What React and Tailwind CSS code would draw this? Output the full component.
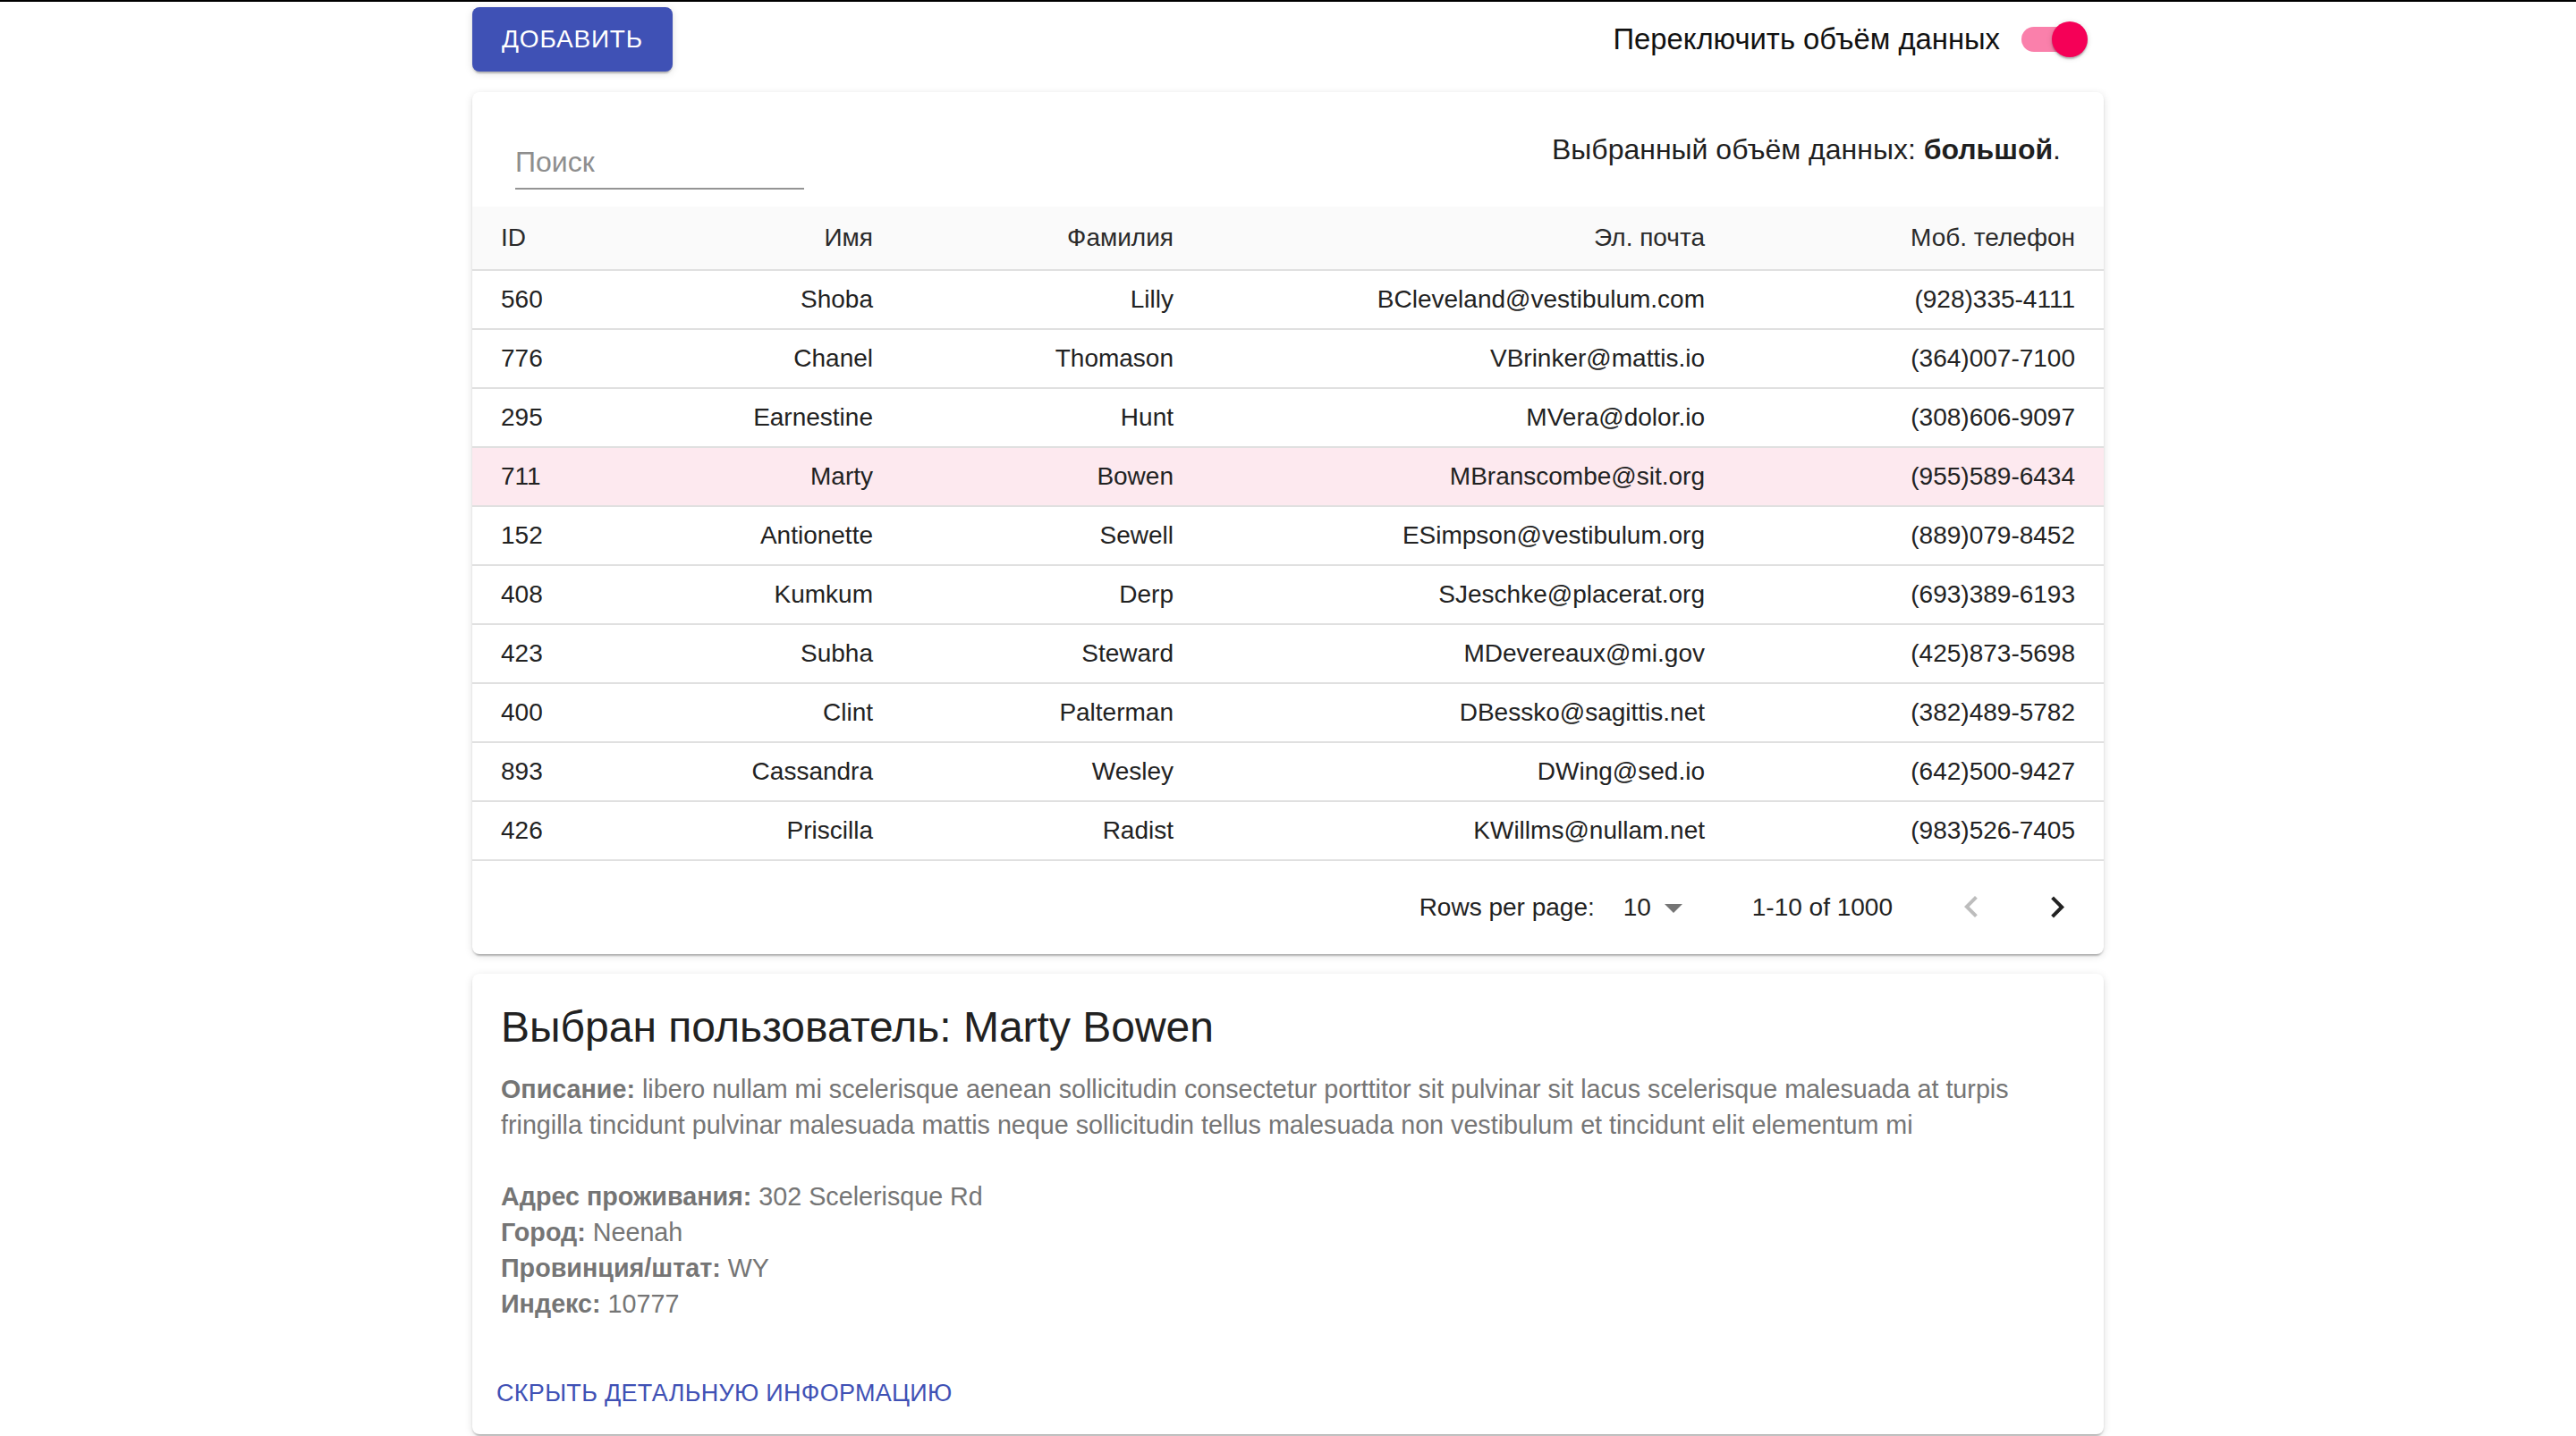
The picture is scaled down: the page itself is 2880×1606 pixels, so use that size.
import React from 'react';

const rows = [
  { id: 560, first: 'Shoba', last: 'Lilly', email: 'BCleveland@vestibulum.com', phone: '(928)335-4111' },
  { id: 776, first: 'Chanel', last: 'Thomason', email: 'VBrinker@mattis.io', phone: '(364)007-7100' },
  { id: 295, first: 'Earnestine', last: 'Hunt', email: 'MVera@dolor.io', phone: '(308)606-9097' },
  { id: 711, first: 'Marty', last: 'Bowen', email: 'MBranscombe@sit.org', phone: '(955)589-6434' },
  { id: 152, first: 'Antionette', last: 'Sewell', email: 'ESimpson@vestibulum.org', phone: '(889)079-8452' },
  { id: 408, first: 'Kumkum', last: 'Derp', email: 'SJeschke@placerat.org', phone: '(693)389-6193' },
  { id: 423, first: 'Subha', last: 'Steward', email: 'MDevereaux@mi.gov', phone: '(425)873-5698' },
  { id: 400, first: 'Clint', last: 'Palterman', email: 'DBessko@sagittis.net', phone: '(382)489-5782' },
  { id: 893, first: 'Cassandra', last: 'Wesley', email: 'DWing@sed.io', phone: '(642)500-9427' },
  { id: 426, first: 'Priscilla', last: 'Radist', email: 'KWillms@nullam.net', phone: '(983)526-7405' },
];

const selectedId = 711;
const cols = 'grid grid-cols-[200px_296px_336px_594px_398px] items-center';
const paper =
  'bg-white rounded-[8px] shadow-[0_2px_2px_0_rgba(0,0,0,0.14),0_6px_2px_-4px_rgba(0,0,0,0.12),0_2px_10px_0_rgba(0,0,0,0.12)]';

function Cells({ r }) {
  return (
    <>
      <div className="pl-[32px]">{r.id}</div>
      <div className="text-right pr-[48px]">{r.first}</div>
      <div className="text-right pr-[48px]">{r.last}</div>
      <div className="text-right pr-[48px]">{r.email}</div>
      <div className="text-right pr-[32px]">{r.phone}</div>
    </>
  );
}

export default function App() {
  return (
    <div className="min-h-[1606px] bg-white font-['Liberation_Sans',Arial,sans-serif] text-[#212121]">
      <div className="h-[2px] bg-black" />

      <div className="w-[1824px] mx-auto">
        {/* Top bar */}
        <div className="h-[84px] flex items-center justify-between">
          <button className="h-[72px] w-[224px] rounded-[8px] bg-[#3f51b5] text-white text-[28px] font-medium tracking-[0.8px] uppercase shadow-[0_2px_2px_0_rgba(0,0,0,0.14),0_6px_2px_-4px_rgba(0,0,0,0.12),0_2px_10px_0_rgba(0,0,0,0.12)]">
            Добавить
          </button>
          <div className="flex items-center">
            <span className="text-[32.8px] text-[#111]">Переключить объём данных</span>
            <div className="relative w-[116px] h-[76px]">
              <div className="absolute left-[24px] top-[24px] w-[68px] h-[28px] rounded-full bg-[#fa80ab]" />
              <div className="absolute left-[58px] top-[18px] w-[40px] h-[40px] rounded-full bg-[#f50057] shadow-[0_2px_2px_0_rgba(0,0,0,0.24),0_1px_6px_0_rgba(0,0,0,0.14)]" />
            </div>
          </div>
        </div>

        {/* Table card */}
        <div className={`mt-[17px] ${paper} overflow-hidden`}>
          <div className="h-[128px] flex justify-between px-[48px]">
            <div className="self-end mb-[19px] w-[323px] border-b-2 border-[#949494] pt-[14px] pb-[10px] h-[64px]">
              <span className="block text-[32px] leading-[38px] text-[#8e8e8e]">Поиск</span>
            </div>
            <div className="self-center text-[32px] text-[#1f1f1f]">
              Выбранный объём данных: <b>большой</b>.
            </div>
          </div>

          <div className={`${cols} h-[72px] bg-[#fafafa] border-b-2 border-[#e0e0e0] text-[28px] text-[#2a2a2a]`}>
            <div className="pl-[32px]">ID</div>
            <div className="text-right pr-[48px]">Имя</div>
            <div className="text-right pr-[48px]">Фамилия</div>
            <div className="text-right pr-[48px]">Эл. почта</div>
            <div className="text-right pr-[32px]">Моб. телефон</div>
          </div>

          {rows.map((r) => (
            <div
              key={r.id}
              className={`${cols} h-[66px] border-b-2 border-[#e0e0e0] text-[28px] text-[#222] ${
                r.id === selectedId ? 'bg-[#fde9ef]' : 'bg-white'
              }`}
            >
              <Cells r={r} />
            </div>
          ))}

          {/* Pagination */}
          <div className="h-[104px] flex items-center justify-end pr-[4px] text-[28px] text-[#222]">
            <span>Rows per page:</span>
            <div className="relative ml-[16px] mr-[64px] w-[96px] h-[48px] flex items-center pl-[16px]">
              <span>10</span>
              <svg className="absolute right-0 top-0 w-[48px] h-[48px]" viewBox="0 0 24 24" fill="#757575">
                <path d="M7 10l5 5 5-5z" />
              </svg>
            </div>
            <span>1-10 of 1000</span>
            <div className="ml-[40px] flex">
              <button className="w-[96px] h-[96px] flex items-center justify-center">
                <svg className="w-[48px] h-[48px]" viewBox="0 0 24 24" fill="rgba(0,0,0,0.26)">
                  <path d="M15.41 16.09l-4.58-4.59 4.58-4.59L14 5.5l-6 6 6 6z" />
                </svg>
              </button>
              <button className="w-[96px] h-[96px] flex items-center justify-center">
                <svg className="w-[48px] h-[48px]" viewBox="0 0 24 24" fill="#222">
                  <path d="M8.59 16.34l4.58-4.59-4.58-4.59L10 5.75l6 6-6 6z" />
                </svg>
              </button>
            </div>
          </div>
        </div>

        {/* Details card */}
        <div className={`mt-[22px] ${paper} px-[32px] pt-[32px] pb-[10px]`}>
          <h2 className="text-[48px] leading-[56px] text-[#212121] mb-[21px]">
            Выбран пользователь: Marty Bowen
          </h2>
          <div className="text-[28.7px] leading-[40px] text-[#757575]">
            <p>
              <b>Описание:</b>{' '}
              <span>
                libero nullam mi scelerisque aenean sollicitudin consectetur porttitor sit pulvinar sit lacus
                scelerisque malesuada at turpis fringilla tincidunt pulvinar malesuada mattis neque sollicitudin tellus
                malesuada non vestibulum et tincidunt elit elementum mi
              </span>
            </p>
            <div className="h-[40px]" />
            <p>
              <b>Адрес проживания:</b> 302 Scelerisque Rd
            </p>
            <p>
              <b>Город:</b> Neenah
            </p>
            <p>
              <b>Провинция/штат:</b> WY
            </p>
            <p>
              <b>Индекс:</b> 10777
            </p>
          </div>
          <button className="mt-[44px] -ml-[17px] h-[72px] px-[12px] text-[27px] tracking-[0.3px] uppercase text-[#3f51b5]">
            Скрыть детальную информацию
          </button>
        </div>
      </div>
    </div>
  );
}
